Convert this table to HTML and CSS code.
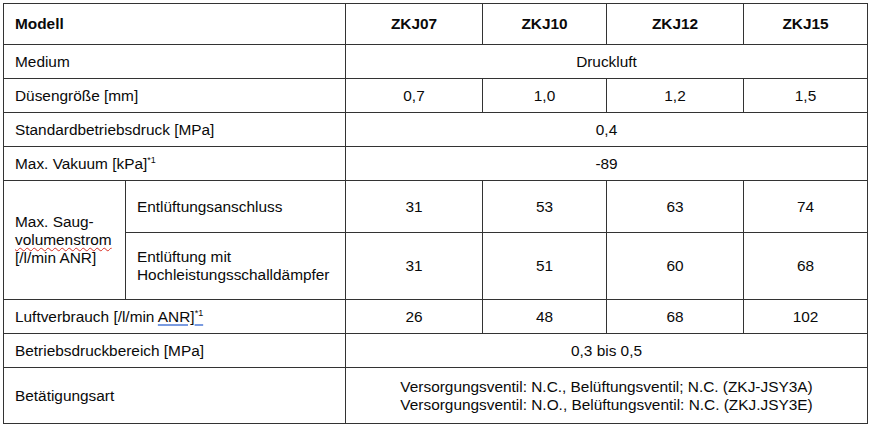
FILE: index.html
```html
<!DOCTYPE html>
<html lang="de">
<head>
<meta charset="utf-8">
<link rel="stylesheet" href="styles.css">
</head>
<body>
<div class="wrap">
<table class="spec">
  <colgroup>
    <col class="c1"><col class="c2"><col class="c3"><col class="c4"><col class="c5"><col class="c6">
  </colgroup>
  <tr class="h41">
    <th colspan="2" class="label">Modell</th>
    <th>ZKJ07</th><th>ZKJ10</th><th>ZKJ12</th><th>ZKJ15</th>
  </tr>
  <tr class="h34">
    <td colspan="2" class="label">Medium</td>
    <td colspan="4">Druckluft</td>
  </tr>
  <tr class="h34">
    <td colspan="2" class="label">Düsengröße [mm]</td>
    <td>0,7</td><td>1,0</td><td>1,2</td><td>1,5</td>
  </tr>
  <tr class="h34">
    <td colspan="2" class="label">Standardbetriebsdruck [MPa]</td>
    <td colspan="4">0,4</td>
  </tr>
  <tr class="h34">
    <td colspan="2" class="label">Max. Vakuum [kPa]<sup>*1</sup></td>
    <td colspan="4">-89</td>
  </tr>
  <tr class="h52">
    <td rowspan="2" class="label">Max. Saug-<br><span class="spell">volumenstrom</span><br>[/l/min ANR]</td>
    <td class="label">Entlüftungsanschluss</td>
    <td>31</td><td>53</td><td>63</td><td>74</td>
  </tr>
  <tr class="h67">
    <td class="label">Entlüftung mit<br>Hochleistungsschalldämpfer</td>
    <td>31</td><td>51</td><td>60</td><td>68</td>
  </tr>
  <tr class="h34">
    <td colspan="2" class="label">Luftverbrauch [/l/min <span class="gram">ANR]<sup>*1</sup></span></td>
    <td>26</td><td>48</td><td>68</td><td>102</td>
  </tr>
  <tr class="h34">
    <td colspan="2" class="label">Betriebsdruckbereich [MPa]</td>
    <td colspan="4">0,3 bis 0,5</td>
  </tr>
  <tr class="h56">
    <td colspan="2" class="label">Betätigungsart</td>
    <td colspan="4">Versorgungsventil: N.C., Belüftungsventil; N.C. (ZKJ-JSY3A)<br>Versorgungsventil: N.O., Belüftungsventil: N.C. (ZKJ.JSY3E)</td>
  </tr>
</table>
</div>
</body>
</html>
```

FILE: styles.css
```css
html, body {
  margin: 0;
  padding: 0;
  background: #ffffff;
}
.wrap {
  padding: 3px 0 0 3px;
}
.spec {
  border-collapse: collapse;
  table-layout: fixed;
  width: 864px;
  font-family: "Liberation Sans", Arial, sans-serif;
  font-size: 15.4px;
  color: #0a0a0a;
  line-height: 18px;
}
.c1 { width: 122px; }
.c2 { width: 220px; }
.c3 { width: 137px; }
.c4 { width: 124px; }
.c5 { width: 137px; }
.c6 { width: 124px; }
.spec th, .spec td {
  border: 1px solid #333333;
  padding: 0 4px;
  text-align: center;
  vertical-align: middle;
  font-weight: normal;
}
.spec th { font-weight: bold; }
.spec .label {
  text-align: left;
  padding-left: 11px;
}
.h41 { height: 41px; }
.h34 { height: 34px; }
.h52 { height: 52px; }
.h67 { height: 67px; }
.h56 { height: 56px; }
sup {
  font-size: 9px;
  line-height: 0;
  vertical-align: 6px;
}
.spell {
  text-decoration: underline wavy #d93025;
  text-decoration-thickness: 1px;
  text-underline-offset: 2px;
}
.gram {
  text-decoration: underline #7a9be0;
  text-decoration-thickness: 2px;
  text-underline-offset: 2px;
}
```
